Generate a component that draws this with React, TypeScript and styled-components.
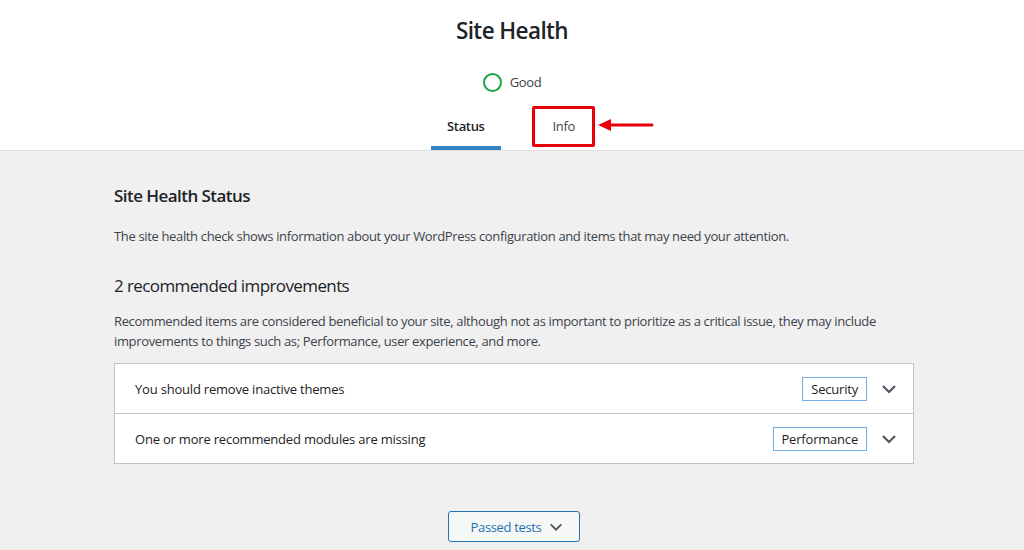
import React from "react";
import styled, { createGlobalStyle } from "styled-components";

const Global = createGlobalStyle`
  html, body { margin: 0; padding: 0; }
  body {
    background: #f0f0f1;
    font-family: "Open Sans", "Noto Sans", sans-serif;
    color: #1d2327;
    font-size: 13px;
    letter-spacing: -0.35px;
  }
`;

const Page = styled.div`
  width: 1024px;
  height: 550px;
  overflow: hidden;
  background: #f0f0f1;
`;

const Header = styled.header`
  background: #fff;
  border-bottom: 1px solid #dcdcde;
  display: flex;
  flex-direction: column;
  align-items: center;
  height: 150px;
`;

const Title = styled.h1`
  margin: 16px 0 0;
  font-size: 22.5px;
  font-weight: 600;
  line-height: 30px;
  letter-spacing: -0.6px;
  color: #1d2327;
`;

const Rating = styled.div`
  display: flex;
  align-items: center;
  gap: 8px;
  margin-top: 26px;
  height: 20px;
  font-size: 13px;
  font-weight: 500;
  color: #3c434a;
`;

const Circle = styled.span`
  width: 15px;
  height: 15px;
  border-radius: 50%;
  border: 2px solid #1ba446;
`;

const Tabs = styled.nav`
  display: flex;
  gap: 36px;
  margin-top: auto;
  height: 44px;
  margin-right: 2px;
`;

const Tab = styled.div<{ $active?: boolean }>`
  position: relative;
  display: flex;
  align-items: center;
  justify-content: center;
  padding: 0 16px;
  font-size: 13px;
  font-weight: ${(p) => (p.$active ? 600 : 400)};
  color: ${(p) => (p.$active ? "#1d2327" : "#3c434a")};
  border-bottom: 4px solid ${(p) => (p.$active ? "#3582c4" : "transparent")};
`;

const Highlight = styled.span`
  position: absolute;
  left: -5px;
  right: -4px;
  top: 0;
  bottom: -1px;
  border: 3px solid #e8000b;
  border-radius: 2px;
`;

const Arrow = styled.svg`
  position: absolute;
  left: 61px;
  top: 13px;
`;

const Content = styled.main`
  width: 800px;
  margin: 0 0 0 114px;
  padding-top: 33px;
`;

const H2 = styled.h2`
  margin: 0;
  font-size: 17px;
  line-height: 24px;
  font-weight: 600;
  letter-spacing: -0.55px;
  color: #1d2327;
`;

const H3 = styled.h3`
  margin: 28px 0 0;
  font-size: 17px;
  line-height: 24px;
  font-weight: 400;
  letter-spacing: -0.6px;
  color: #1d2327;
`;

const P = styled.p<{ $mt: number }>`
  margin: ${(p) => p.$mt}px 0 0;
  font-size: 13px;
  line-height: 20px;
  color: #3c434a;
`;

const Accordion = styled.div`
  margin-top: 12px;
  border: 1px solid #c3c4c7;
  background: #fff;
`;

const Row = styled.div`
  display: flex;
  align-items: center;
  height: 49px;
  padding: 0 16px 0 20px;
  & + & {
    border-top: 1px solid #c3c4c7;
  }
`;

const RowTitle = styled.span`
  flex: 1;
  font-size: 13px;
  font-weight: 500;
  letter-spacing: -0.2px;
  color: #1d2327;
`;

const Badge = styled.span`
  border: 1px solid #72aee6;
  padding: 1px 8px;
  font-size: 13px;
  line-height: 20px;
  letter-spacing: -0.2px;
  color: #1d2327;
  margin-right: 14px;
`;

const Chevron = ({ w = 16 }: { w?: number }) => (
  <svg width={w} height="10" viewBox="0 0 16 10">
    <path d="M2 2 L8 8 L14 2" fill="none" stroke="#50575e" strokeWidth="2.2" />
  </svg>
);

const Center = styled.div`
  display: flex;
  justify-content: center;
  margin-top: 47px;
`;

const Button = styled.button`
  display: flex;
  align-items: center;
  gap: 8px;
  height: 31px;
  padding: 0 16px 0 22px;
  border: 1px solid #2271b1;
  border-radius: 3px;
  background: #f6f7f7;
  color: #2271b1;
  font-family: inherit;
  font-size: 13px;
  letter-spacing: -0.35px;
`;

export default function App() {
  return (
    <Page>
      <Global />
      <Header>
        <Title>Site Health</Title>
        <Rating>
          <Circle />
          Good
        </Rating>
        <Tabs>
          <Tab $active>Status</Tab>
          <Tab>
            Info
            <Highlight />
            <Arrow width="60" height="12" viewBox="0 0 60 12">
              <polygon points="0,6 13,0 13,12" fill="#e8000b" />
              <line x1="10" y1="6" x2="54" y2="6" stroke="#e8000b" strokeWidth="3" strokeLinecap="round" />
            </Arrow>
          </Tab>
        </Tabs>
      </Header>
      <Content>
        <H2>Site Health Status</H2>
        <P $mt={18}>
          The site health check shows information about your WordPress configuration and items that may need your attention.
        </P>
        <H3>2 recommended improvements</H3>
        <P $mt={13}>
          Recommended items are considered beneficial to your site, although not as important to prioritize as a critical issue, they may include improvements to things such as; Performance, user experience, and more.
        </P>
        <Accordion>
          <Row>
            <RowTitle>You should remove inactive themes</RowTitle>
            <Badge>Security</Badge>
            <Chevron />
          </Row>
          <Row>
            <RowTitle>One or more recommended modules are missing</RowTitle>
            <Badge>Performance</Badge>
            <Chevron />
          </Row>
        </Accordion>
        <Center>
          <Button>
            Passed tests
            <Chevron w={14} />
          </Button>
        </Center>
      </Content>
    </Page>
  );
}
